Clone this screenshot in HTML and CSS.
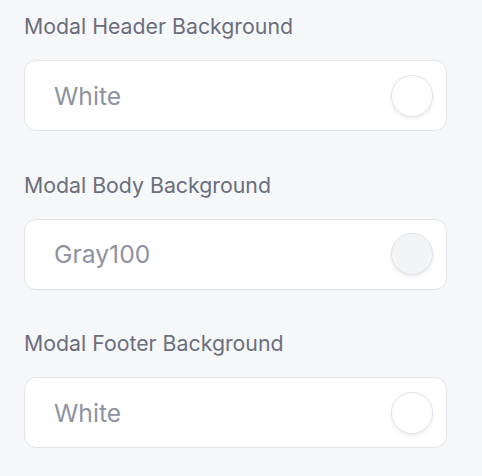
FILE: index.html
```html
<!DOCTYPE html>
<html>
<head>
<meta charset="utf-8">
<link rel="stylesheet" href="styles.css">
</head>
<body>
<div class="form">
  <div class="field">
    <div class="label">Modal Header Background</div>
    <div class="input">
      <span class="value">White</span>
      <span class="swatch swatch-white"></span>
    </div>
  </div>
  <div class="field">
    <div class="label">Modal Body Background</div>
    <div class="input">
      <span class="value">Gray100</span>
      <span class="swatch swatch-gray"></span>
    </div>
  </div>
  <div class="field">
    <div class="label">Modal Footer Background</div>
    <div class="input">
      <span class="value">White</span>
      <span class="swatch swatch-white"></span>
    </div>
  </div>
</div>
</body>
</html>
```
FILE: styles.css
```css
html, body {
  margin: 0;
  padding: 0;
  background: #f6f7f9;
}
body {
  font-family: Inter, "Noto Sans", sans-serif;
}
.form {
  padding: 12px 35px 0 24px;
  display: flex;
  flex-direction: column;
  gap: 39.5px;
}
.field {
  display: flex;
  flex-direction: column;
  gap: 20px;
}
.label {
  font-size: 21.3px;
  line-height: 28px;
  color: #6b6e7c;
}
.input {
  height: 71px;
  box-sizing: border-box;
  background: #fff;
  border: 1px solid #e3e4ea;
  border-radius: 12px;
  display: flex;
  align-items: center;
  justify-content: space-between;
  padding: 0 13px 0 29px;
}
.value {
  font-size: 24.7px;
  color: #8f92a1;
}
.swatch {
  width: 42px;
  height: 42px;
  border-radius: 50%;
  box-sizing: border-box;
  border: 1px solid #e2e3ea;
  box-shadow: 0 2px 4px rgba(30, 30, 60, 0.08);
}
.swatch-white { background: #fff; }
.swatch-gray { background: #f3f4f6; }
```
